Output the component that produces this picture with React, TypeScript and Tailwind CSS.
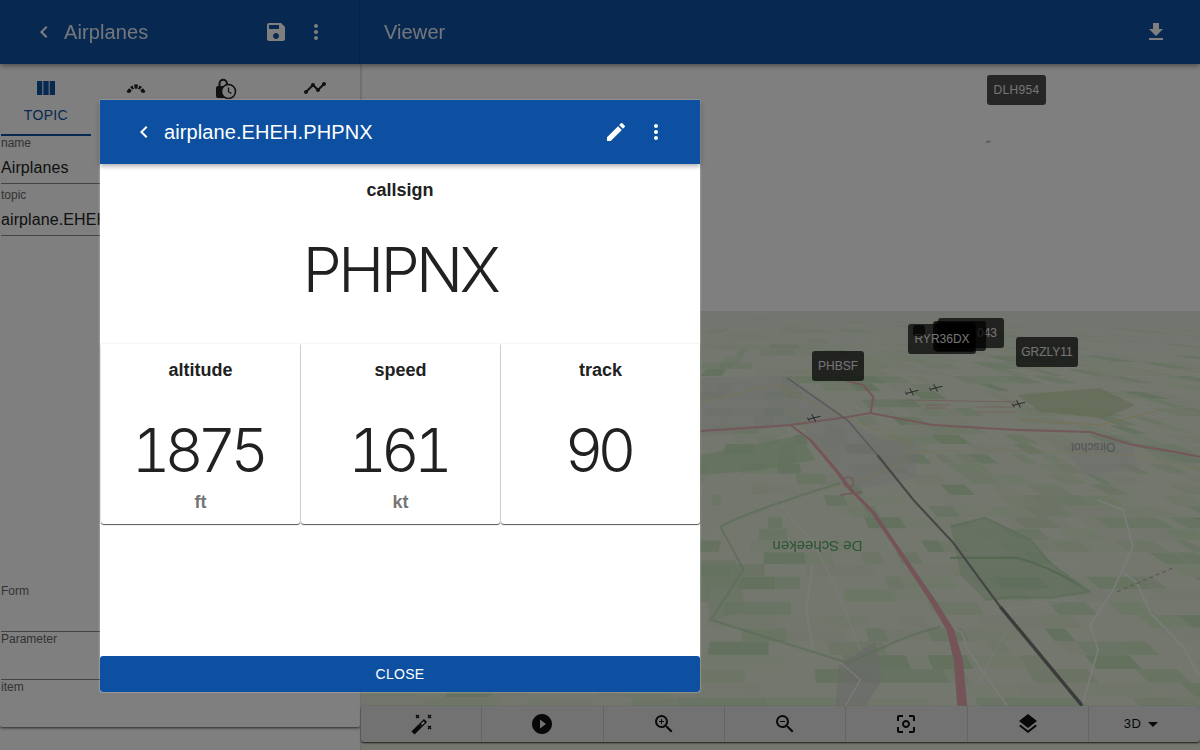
import {
  MdCenterFocusWeak,
  MdChevronLeft,
  MdEdit,
  MdFileDownload,
  MdLayers,
  MdMoreVert,
  MdPlayCircleFilled,
  MdSave,
  MdTimeline,
  MdViewColumn,
  MdZoomIn,
  MdZoomOut,
  MdArrowDropDown,
} from "react-icons/md";

const SANS = "font-['Liberation_Sans',Arial,sans-serif]";

function rng(seed: number) {
  let s = seed;
  return () => {
    s = (s * 16807) % 2147483647;
    return s / 2147483647;
  };
}

// fake perspective farmland, vanishing somewhere above the rail line
function buildFields() {
  const rand = rng(4711);
  const colors = ["#d8ecca", "#cfe7c2", "#dfeed2", "#e9f0dc", "#c6e2bb", "#e3ead6"];
  const out: { points: string; fill: string; opacity: number }[] = [];
  const rows = 44;
  const vx = 770;
  const vy = 300;
  const rowY = (k: number) => 312 + 400 * Math.pow(k / rows, 1.6);
  for (let r = 0; r < rows; r++) {
    const y0 = rowY(r);
    const y1 = rowY(r + 1);
    const f0 = (y0 - vy) / 400;
    const f1 = (y1 - vy) / 400;
    let u = (360 - vx) / f0;
    const max = (1200 - vx) / f0;
    const step = Math.max(40, 16 / f0);
    while (u < max) {
      const w = step * (0.5 + rand() * 1.4);
      if (rand() > 0.35) {
        const pts = [
          [vx + u * f0, y0],
          [vx + (u + w) * f0, y0],
          [vx + (u + w) * f1, y1],
          [vx + u * f1, y1],
        ];
        out.push({
          points: pts.map((p) => p.map((n) => n.toFixed(1)).join(",")).join(" "),
          fill: colors[Math.floor(rand() * colors.length)],
          opacity: 0.5 + rand() * 0.5,
        });
      }
      u += w;
    }
  }
  return out;
}

const fields = buildFields();

const highway: [number, number, number][] = [
  [790, 425, 3],
  [810, 440, 3.5],
  [837, 472, 4],
  [848, 487, 4.5],
  [873, 513, 4.5],
  [900, 553, 5],
  [933, 602, 6.5],
  [950, 630, 8],
  [958, 660, 9],
  [962, 706, 10],
];

const highwayShape =
  highway.map(([x, y, w]) => `${x - w / 2},${y}`).join(" ") +
  " " +
  [...highway]
    .reverse()
    .map(([x, y, w]) => `${x + w / 2},${y}`)
    .join(" ");

function Plane({ x, y, s = 1 }: { x: number; y: number; s?: number }) {
  return (
    <g transform={`translate(${x} ${y}) scale(${s}) rotate(-14)`} stroke="#555" fill="none">
      <path d="M-6 1 L7 1" strokeWidth="1" />
      <path d="M-1 -3 L1 5" strokeWidth="1" />
      <path d="M-6 -1 L-5 3" strokeWidth="0.8" />
    </g>
  );
}

function MapDrawing() {
  return (
    <svg
      viewBox="360 64 840 686"
      className="absolute inset-0 h-full w-full blur-[0.7px]"
      aria-hidden="true"
    >
      <defs>
        <linearGradient id="haze" x1="0" y1="0" x2="0" y2="1">
          <stop offset="0" stopColor="#e6ebe0" stopOpacity="0.9" />
          <stop offset="1" stopColor="#e6ebe0" stopOpacity="0" />
        </linearGradient>
      </defs>
      <rect x="360" y="311" width="840" height="440" fill="#e8efdd" />
      {fields.map((f, i) => (
        <polygon key={i} points={f.points} fill={f.fill} opacity={f.opacity} stroke="#fff" strokeOpacity="0.25" strokeWidth="0.5" />
      ))}
      <rect x="360" y="311" width="840" height="60" fill="url(#haze)" />

      {/* towns */}
      <polygon points="700,378 790,376 845,418 880,440 918,442 915,478 860,490 835,470 800,425 700,436" fill="#dddddd" opacity="0.5" />
      <polygon points="1060,445 1130,440 1140,470 1085,475" fill="#dddddd" opacity="0.4" />
      <polygon points="838,665 875,642 882,680 865,706 835,706" fill="#d2d2d2" opacity="0.6" />
      <polygon points="700,455 800,435 815,460 760,470 700,475" fill="#c2e2b4" opacity="0.7" />

      {/* forests */}
      <polygon points="1017,395 1100,388 1135,405 1105,418 1040,412" fill="#c8d8ac" opacity="0.75" />
      <polygon points="950,525 985,518 1030,540 1052,565 1090,592 1025,600 985,600 960,575" fill="#bcdab4" opacity="0.55" />
      <polygon points="700,560 735,560 745,610 710,622" fill="#c9e4bd" opacity="0.5" />

      {/* green boundaries */}
      <g fill="none" stroke="#b8dab0" strokeWidth="2.4" opacity="0.65">
        <path d="M720 527 C730 520 770 505 840 483" />
        <path d="M720 527 L743 570 L710 620 L847 663 C880 650 905 635 940 627" />
        <path d="M950 558 L1017 558 C1050 567 1070 580 1090 592" stroke="#9cc894" />
        <path d="M950 527 L985 518 L1030 540 L1052 565 L1090 592" />
        <path d="M985 600 L1010 597 L1050 598 L1090 592" />
      </g>

      {/* small yellow roads */}
      <g fill="none" stroke="#f0e6ac" strokeWidth="1" opacity="0.85">
        <path d="M700 402 L775 385 L838 415 L890 435 L910 445 L905 462 L860 480 L830 488" />
        <path d="M780 385 L800 420 L838 470" />
        <path d="M700 560 L725 540" />
        <path d="M1200 470 L1130 455 L1000 450 L905 452" strokeWidth="0.8" />
        <path d="M1020 420 L1100 425 L1160 410" strokeWidth="1" stroke="#f2dfa0" />
      </g>

      {/* white roads */}
      <g fill="none" stroke="#f8f8f8" opacity="0.85">
        <path d="M1097 500 L1123 510 L1133 547 L1113 590 L1090 625 L1098 650 L1082 706" strokeWidth="2" />
        <path d="M1123 573 L1137 583 L1150 613 L1183 647 L1200 677" strokeWidth="2" />
        <path d="M950 627 L962 633 L967 650 L1007 706" strokeWidth="1.8" />
        <path d="M812 565 L806 610 L812 650" strokeWidth="1.4" />
        <path d="M780 505 L815 545 L840 600 L860 650" strokeWidth="1" />
        <path d="M1000 610 L1060 603 M1010 625 L990 660 L975 690" strokeWidth="1" opacity="0.7" />
        <path d="M840 663 L860 680 L845 706" strokeWidth="1.4" />
      </g>
      <path d="M1117 592 L1173 568" stroke="#b9a8a8" strokeWidth="1.2" strokeDasharray="4 3" />

      {/* motorways */}
      <polygon points={highwayShape} fill="#eaa9b2" />
      <path
        d="M700 431 L790 425 L847 417 L870 413 L933 425 L1017 430 L1090 432 L1133 445 L1180 453 L1200 457"
        fill="none"
        stroke="#e6b0b4"
        strokeWidth="2.2"
      />
      <path d="M870 413 L873 397 L863 385 L846 381" fill="none" stroke="#e6b0b4" strokeWidth="2.2" />
      <path d="M843 482 a5 5 0 1 0 10 0 a5 5 0 1 0 -10 0" fill="none" stroke="#e6b0b4" strokeWidth="1.5" />
      <path d="M840 495 L862 492" stroke="#e6b0b4" strokeWidth="1.5" />

      {/* rail */}
      <path d="M787 378 L847 420 L877 455" fill="none" stroke="#b4b4b4" strokeWidth="1.6" />
      <path d="M877 455 L913 500 L953 543 L1000 607" fill="none" stroke="#8c8c8c" strokeWidth="2.2" />
      <path d="M1000 607 L1082 706" fill="none" stroke="#767676" strokeWidth="3.4" />

      {/* airfield hatch */}
      <g stroke="#e8a8a8" strokeWidth="0.8" opacity="0.8">
        <path d="M907 400 L1017 402 M925 405 L950 405 M975 407 L1015 407 M925 408 L945 408 M975 412 L1015 412" />
      </g>

      <text x="817" y="551" transform="rotate(180 817 546)" fontSize="15" fill="#57a866" fontFamily="Liberation Sans, sans-serif" textAnchor="middle">
        De Scheeken
      </text>
      <text x="1093" y="451" transform="rotate(180 1093 447)" fontSize="12" fill="#a8a8a8" fontFamily="Liberation Sans, sans-serif" textAnchor="middle">
        Oirschot
      </text>

      <Plane x={813} y={417} />
      <Plane x={911} y={391} />
      <Plane x={935} y={387} />
      <Plane x={1018} y={403} />
      <Plane x={988} y={141} s={0.4} />
    </svg>
  );
}

function PlaneLabel({ text, className }: { text: string; className: string }) {
  return (
    <div
      className={`absolute flex h-[30px] items-center justify-center rounded-[3px] bg-black/70 text-xs text-[#e8e8e8] ${className}`}
    >
      {text}
    </div>
  );
}

function ToolButton({ children, last }: { children: React.ReactNode; last?: boolean }) {
  return (
    <div
      className={`flex items-center justify-center text-[#111] ${
        last ? "w-[111px] shrink-0" : "flex-1 border-r border-[#c8c8c8]"
      }`}
    >
      {children}
    </div>
  );
}

function WandIcon() {
  return (
    <svg viewBox="0 0 24 24" className="size-6" aria-hidden="true">
      <path d="M4 21 L11.5 13.5" stroke="currentColor" strokeWidth="4.4" />
      <path d="M11.5 13.5 L16.5 8.5" stroke="currentColor" strokeWidth="4.4" />
      <path d="M12.6 12.4 L15.2 9.8" stroke="#fff" strokeWidth="1.8" />
      <path
        d="M7 3 L10 6 M10 3 L7 6 M19 3 L22 6 M22 3 L19 6 M19 14 L22 17 M22 14 L19 17"
        stroke="currentColor"
        strokeWidth="1.3"
      />
    </svg>
  );
}

function GaugeIcon() {
  return (
    <svg viewBox="0 0 24 24" className="size-6 text-[#222]" fill="currentColor" aria-hidden="true">
      <path d="M2.5 15.5 L5 12.2 L7.6 14 L6.6 16.6 L4 17 Z" />
      <path d="M6 11 L8.6 9.4 L10 13 L8.4 13.6 Z" />
      <path d="M10 8.6 L14 8.6 L13.3 12.8 L10.9 12.8 Z" />
      <path d="M15.4 9.4 L18 11 L15.6 13.6 L14 13 Z" />
      <path d="M19 12.2 L21.5 15.5 L20 17 L17.4 16.6 L16.4 14 Z" />
    </svg>
  );
}

function LockClockIcon() {
  return (
    <svg viewBox="0 0 24 24" className="size-6 text-[#222]" aria-hidden="true">
      <path d="M6.5 11 V7.5 a3.7 3.7 0 0 1 7.4 0 V11" fill="none" stroke="currentColor" strokeWidth="2" />
      <rect x="3" y="10" width="14" height="12" rx="2" fill="currentColor" />
      <circle cx="15.5" cy="15.5" r="7" fill="#fff" stroke="currentColor" strokeWidth="1.6" />
      <path d="M15.5 11.5 V15.7 L18.5 17.5" fill="none" stroke="currentColor" strokeWidth="1.3" />
    </svg>
  );
}

function Field({ label, value, border = true }: { label: string; value?: string; border?: boolean }) {
  return (
    <div className={`h-12 shrink-0 ${border ? "border-b border-[#888]" : ""}`}>
      <div className="text-xs leading-[14px] text-[#666]">{label}</div>
      {value && <div className="mt-[6px] whitespace-nowrap text-base leading-6 tracking-[0.1px] text-[#222]">{value}</div>}
    </div>
  );
}

function Stat({ label, value, unit }: { label: string; value: string; unit: string }) {
  return (
    <div className="flex h-[180px] flex-col items-center rounded-b-[3px] bg-white shadow-[0_1px_1px_rgba(0,0,0,0.65),0_0_2px_rgba(0,0,0,0.15)]">
      <div className="mt-4 text-[18px] font-bold leading-5 text-[#212121]">{label}</div>
      <div className="mt-[35px] pr-[6px] font-['Inter',sans-serif] text-[60px] font-light tabular-nums leading-[70px] tracking-[-6px] text-[#212121]">
        {value}
      </div>
      <div className="mt-[7px] text-[18px] font-bold leading-5 text-[#757575]">{unit}</div>
    </div>
  );
}

export default function App() {
  return (
    <div className={`relative flex h-[750px] w-[1200px] flex-col overflow-hidden bg-white ${SANS}`}>
      <header className="z-10 flex h-16 shrink-0 bg-[#0d50a2] text-white shadow-[0_2px_5px_rgba(0,0,0,0.4)]">
        <div className="flex w-[360px] items-center border-r border-[#0a4288] pl-8 pr-[31px]">
          <MdChevronLeft className="size-6" />
          <span className="ml-2 flex-1 text-xl tracking-[0.1px] opacity-90">Airplanes</span>
          <MdSave className="size-6" />
          <MdMoreVert className="ml-4 size-6" />
        </div>
        <div className="flex flex-1 items-center pl-6 pr-8">
          <span className="flex-1 text-xl tracking-[0.1px] opacity-90">Viewer</span>
          <MdFileDownload className="size-6" />
        </div>
      </header>

      <div className="flex min-h-0 flex-1">
        <aside className="flex h-[663px] w-[360px] shrink-0 flex-col rounded-b-[2px] bg-white pl-[1px] shadow-[0_1px_3px_rgba(0,0,0,0.7)]">
          <nav className="grid h-[72px] shrink-0 grid-cols-4">
            <div className="flex flex-col items-center border-b-2 border-[#0d50a2] pt-3 text-[#0d50a2]">
              <MdViewColumn className="size-6" />
              <span className="mt-[5px] text-sm tracking-[0.3px]">TOPIC</span>
            </div>
            <div className="flex justify-center pt-3"><GaugeIcon /></div>
            <div className="flex justify-center pt-3"><LockClockIcon /></div>
            <div className="flex justify-center pt-3 text-[#222]"><MdTimeline className="size-6" /></div>
          </nav>
          <div className="flex flex-1 flex-col gap-1">
            <Field label="name" value="Airplanes" />
            <Field label="topic" value="airplane.EHEH.PHPNX" />
            <div className="mt-auto -mb-px flex flex-col">
              <Field label="Form" />
              <Field label="Parameter" />
              <Field label="item" border={false} />
            </div>
          </div>
        </aside>

        <main className="relative flex-1 border-l border-[#ddd]">
          <MapDrawing />
          <PlaneLabel text="DLH954" className="left-[626px] top-[11px] w-[59px] tracking-[0.3px]" />
          <PlaneLabel text="PHBSF" className="left-[451px] top-[287px] w-[52px]" />
          <PlaneLabel text="GRZLY11" className="left-[655px] top-[273px] w-[62px]" />
          <PlaneLabel text="043" className="left-[577px] top-[254px] w-[66px] justify-end pr-[7px]" />
          <PlaneLabel text="" className="left-[572px] top-[257px] w-[53px]" />
          <PlaneLabel text="" className="left-[574px] top-[258px] w-[40px]" />
          <PlaneLabel text="RYR36DX" className="left-[547px] top-[260px] w-[68px]" />
          <div className="absolute left-[552px] top-[261px] h-[11px] w-3 rounded-[3px] bg-black/70" />

          <div className="absolute bottom-2 left-0 right-0 flex h-9 rounded-[3px] bg-[#e4e4e4] shadow-[0_1px_2px_rgba(0,0,0,0.8)]">
            <ToolButton><WandIcon /></ToolButton>
            <ToolButton><MdPlayCircleFilled className="size-6" /></ToolButton>
            <ToolButton><MdZoomIn className="size-6" /></ToolButton>
            <ToolButton><MdZoomOut className="size-6" /></ToolButton>
            <ToolButton><MdCenterFocusWeak className="size-6" /></ToolButton>
            <ToolButton><MdLayers className="size-6" /></ToolButton>
            <ToolButton last>
              <span className="text-[13px] tracking-[0.3px]">3D</span>
              <MdArrowDropDown className="size-6" />
            </ToolButton>
          </div>
        </main>
      </div>

      {/* scrim + dialog */}
      <div className="absolute inset-0 z-20 bg-black/50" />
      <div className="absolute left-[100px] top-[100px] z-30 flex h-[592px] w-[600px] flex-col rounded-b-[3px] bg-white shadow-[0_0_2px_rgba(255,255,255,0.7)]">
        <div className="flex h-16 shrink-0 items-center bg-[#0d50a2] pl-8 pr-8 text-white shadow-[0_2px_5px_rgba(0,0,0,0.35)]">
          <MdChevronLeft className="size-6" />
          <span className="ml-2 flex-1 text-xl tracking-[0.1px]">airplane.EHEH.PHPNX</span>
          <MdEdit className="size-6" />
          <MdMoreVert className="ml-4 size-6" />
        </div>
        <section className="flex h-[180px] shrink-0 flex-col items-center">
          <div className="mt-4 text-[18px] font-bold leading-5 text-[#212121]">callsign</div>
          <div className="mt-[30px] font-['Inter',sans-serif] text-[62px] font-light leading-[80px] tracking-[-3.5px] text-[#212121]">
            PHPNX
          </div>
        </section>
        <div className="grid grid-cols-3 gap-[1px] pl-[1px]">
          <Stat label="altitude" value="1875" unit="ft" />
          <Stat label="speed" value="161" unit="kt" />
          <Stat label="track" value="90" unit="" />
        </div>
        <button className="mt-auto h-9 rounded-[3px] bg-[#0d50a2] text-sm tracking-[0.3px] text-white">CLOSE</button>
      </div>
    </div>
  );
}
